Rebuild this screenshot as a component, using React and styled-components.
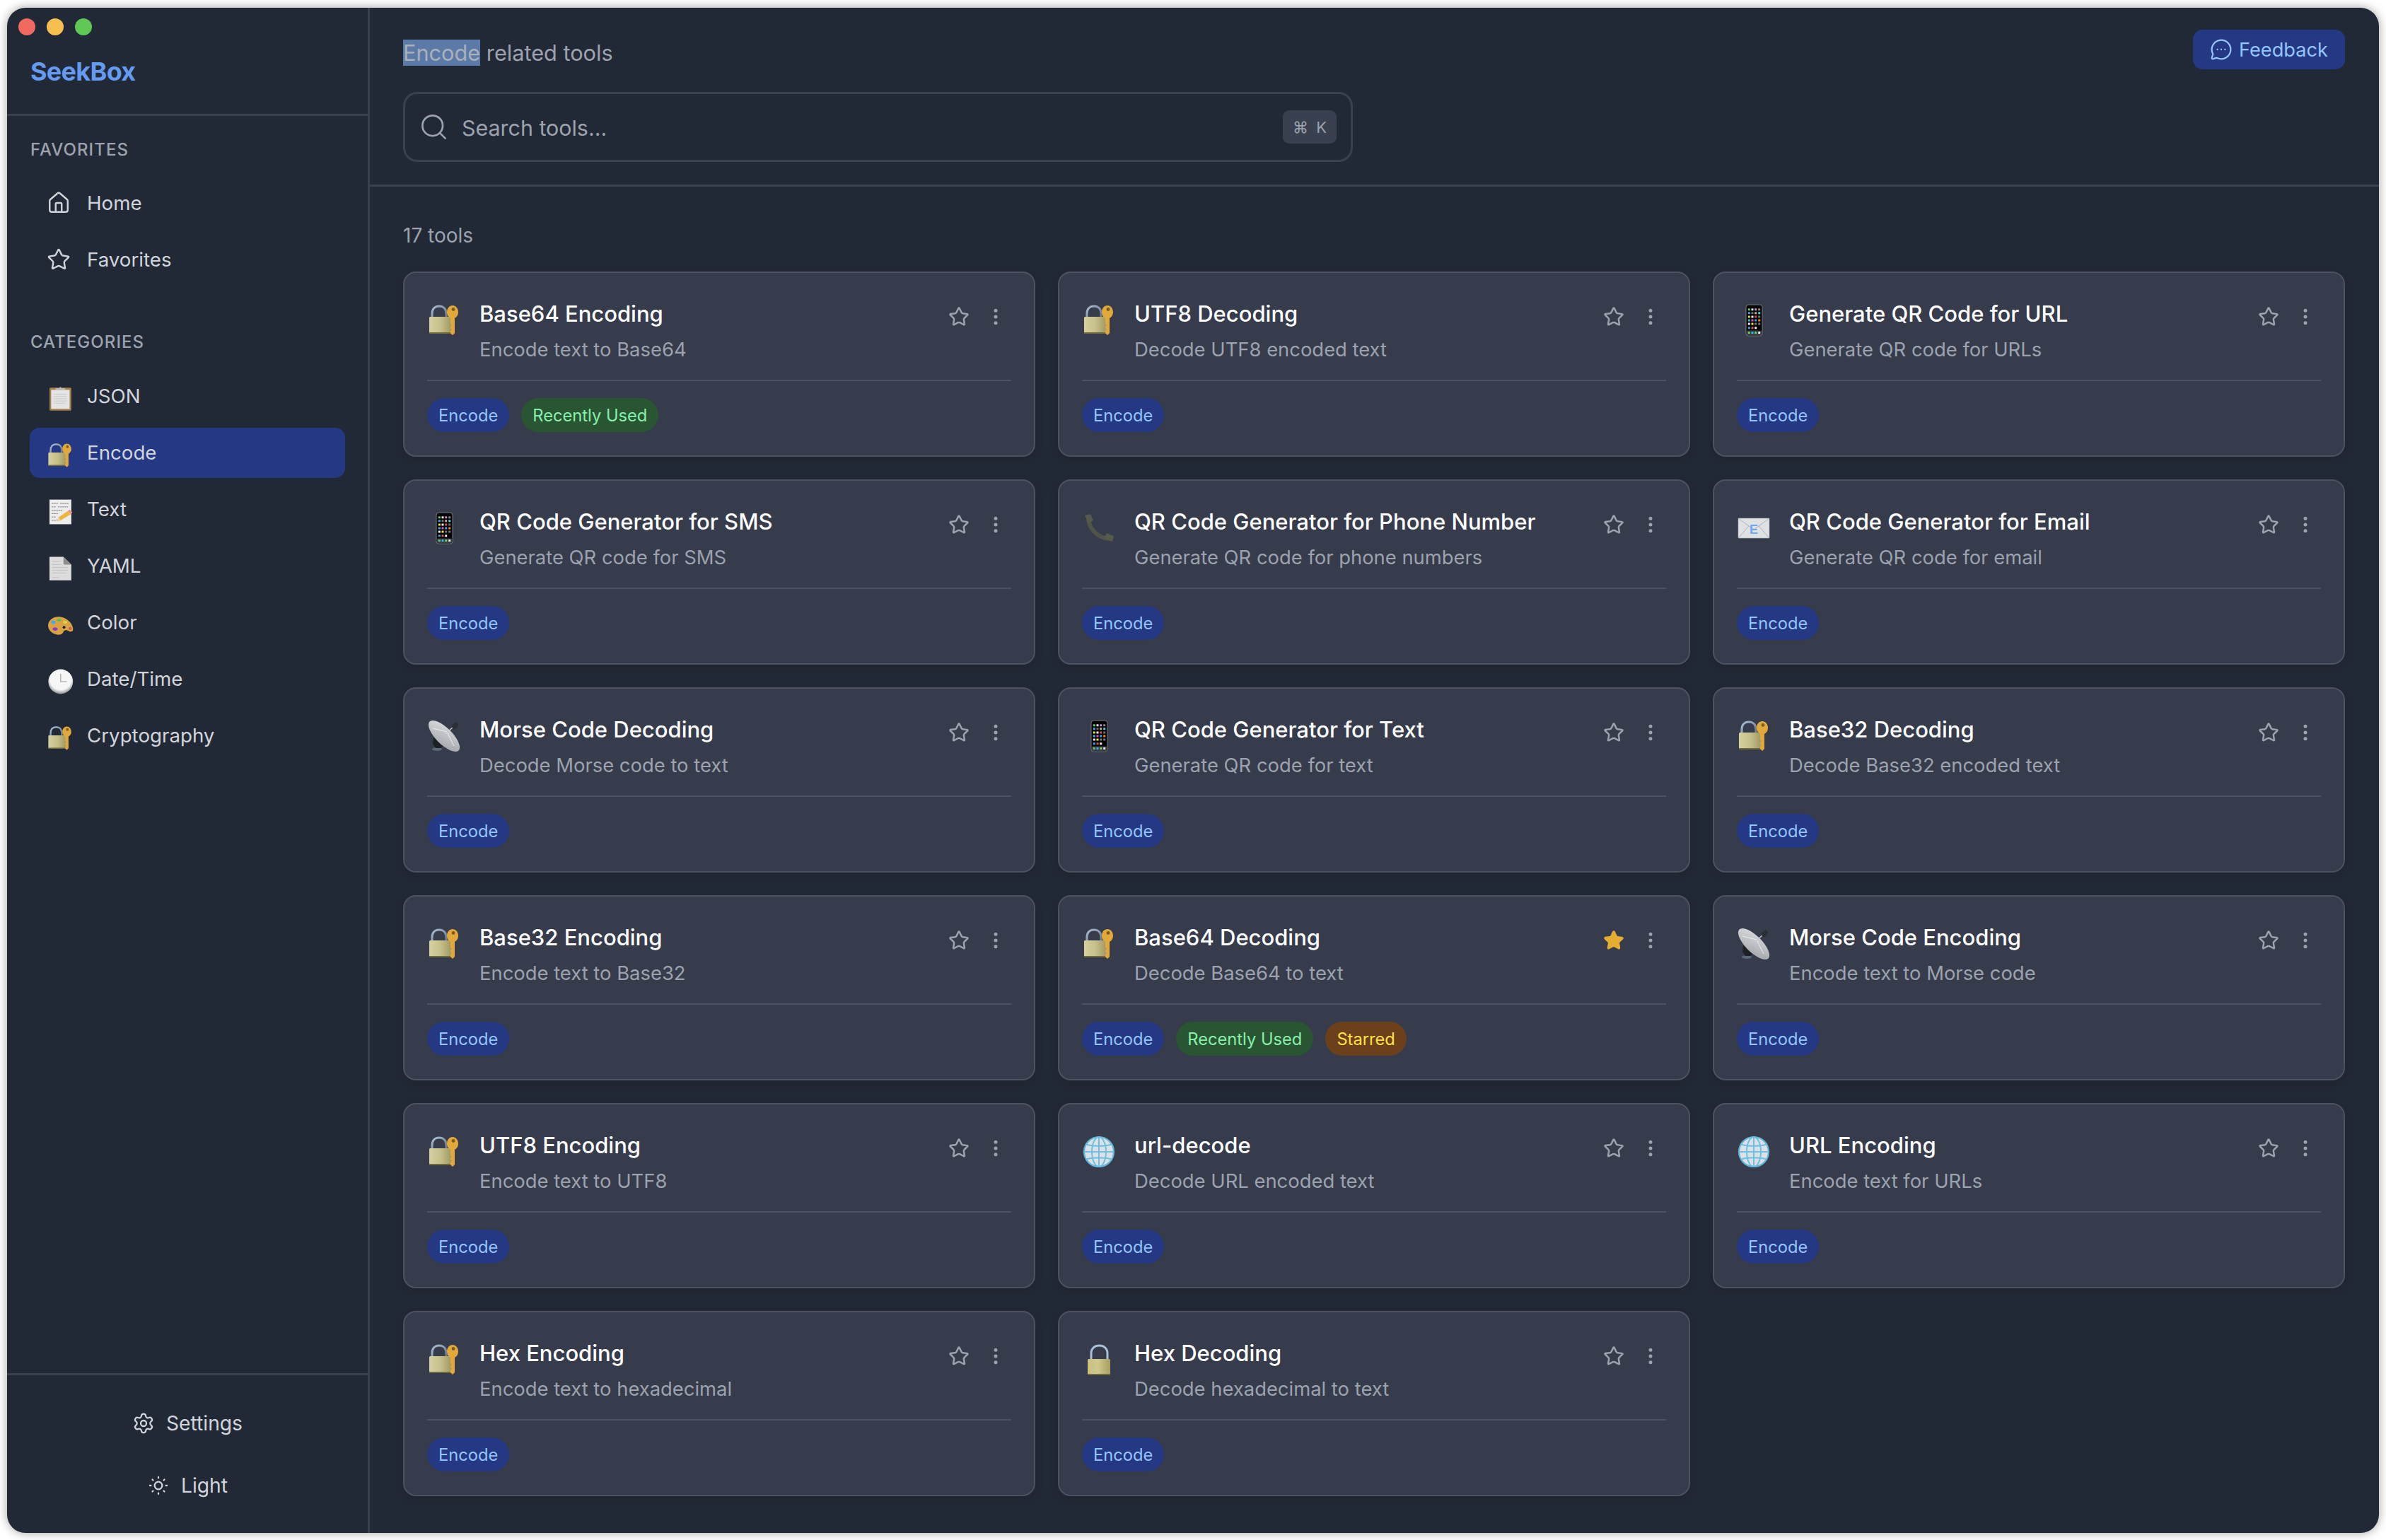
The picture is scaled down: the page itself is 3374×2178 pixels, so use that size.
import React from 'react';
import styled, { createGlobalStyle } from 'styled-components';
import {
    Home, Star, Search, Settings, SunMedium, MessageCircleMore, EllipsisVertical,
} from 'lucide-react';

const NAV_CATEGORIES = [
    { name: 'JSON', icon: 'clipboard' },
    { name: 'Encode', icon: 'lockKey', active: true },
    { name: 'Text', icon: 'memo' },
    { name: 'YAML', icon: 'page' },
    { name: 'Color', icon: 'palette' },
    { name: 'Date/Time', icon: 'clock' },
    { name: 'Cryptography', icon: 'lockKey' },
];

const TOOLS = [
    { title: 'Base64 Encoding', desc: 'Encode text to Base64', icon: 'lockKey', recent: true },
    { title: 'UTF8 Decoding', desc: 'Decode UTF8 encoded text', icon: 'lockKey' },
    { title: 'Generate QR Code for URL', desc: 'Generate QR code for URLs', icon: 'phone' },
    { title: 'QR Code Generator for SMS', desc: 'Generate QR code for SMS', icon: 'phone' },
    { title: 'QR Code Generator for Phone Number', desc: 'Generate QR code for phone numbers', icon: 'receiver' },
    { title: 'QR Code Generator for Email', desc: 'Generate QR code for email', icon: 'envelope' },
    { title: 'Morse Code Decoding', desc: 'Decode Morse code to text', icon: 'dish' },
    { title: 'QR Code Generator for Text', desc: 'Generate QR code for text', icon: 'phone' },
    { title: 'Base32 Decoding', desc: 'Decode Base32 encoded text', icon: 'lockKey' },
    { title: 'Base32 Encoding', desc: 'Encode text to Base32', icon: 'lockKey' },
    { title: 'Base64 Decoding', desc: 'Decode Base64 to text', icon: 'lockKey', recent: true, starred: true },
    { title: 'Morse Code Encoding', desc: 'Encode text to Morse code', icon: 'dish' },
    { title: 'UTF8 Encoding', desc: 'Encode text to UTF8', icon: 'lockKey' },
    { title: 'url-decode', desc: 'Decode URL encoded text', icon: 'globe' },
    { title: 'URL Encoding', desc: 'Encode text for URLs', icon: 'globe' },
    { title: 'Hex Encoding', desc: 'Encode text to hexadecimal', icon: 'lockKey' },
    { title: 'Hex Decoding', desc: 'Decode hexadecimal to text', icon: 'lock' },
];

const PHONE_APPS = [
    ['#5fd068', '#e8e8e8', '#c58ad8', '#8a8a8a'],
    ['#3fa9f0', '#6e6e6e', '#c9b48a', '#4fd0e8'],
    ['#f2d93c', '#efefef', '#e0504a', '#6e6e6e'],
    ['#36c0e0', '#e04fc0', '#3fa0f0', '#f08a20'],
    ['#f2f2f2', '#f2d93c', '#777777', '#777777'],
    ['#3fa9f0', '#e0504a', '#f2f2f2', '#000000'],
];
const PHONE_COLS = [17.3, 22, 26.7, 31.7];
const PHONE_ROWS = [8.7, 13.7, 19, 24, 29, 34.7];
const PHONE_DOCK = ['#5fd068', '#3fa9f0', '#5fd068', '#e8e8e8'];

function LockKeyDrawing() {
    return (
        <>
            <defs>
                <linearGradient id="brass" x1="0" x2="1" y1="0" y2="0">
                    <stop offset="0" stopColor="#d6d1a0" />
                    <stop offset="0.5" stopColor="#c6bf8a" />
                    <stop offset="1" stopColor="#9c9460" />
                </linearGradient>
                <linearGradient id="shackle" x1="0" x2="1" y1="0" y2="1">
                    <stop offset="0" stopColor="#a8bed8" />
                    <stop offset="1" stopColor="#6f7680" />
                </linearGradient>
            </defs>
            <path d="M7 20v-5C7 8 11 4 17 4s10 4 10 11v5" fill="none" stroke="url(#shackle)" strokeWidth="3.2" />
            <rect x="3" y="19" width="33" height="24" rx="1.5" fill="url(#brass)" />
            <rect x="3" y="41" width="33" height="2" fill="#6f6a3c" />
            <path d="M36 3c4.500 0 8 4 8 9.500 0 4-2 7-5 8.500v21l-3 3-3-3v-3l2-2-2-2v-2l2-2-2-2V21c-3-1.500-5-4.500-5-8.500C28 7 31.500 3 36 3z" fill="#e0a93a" />
            <circle cx="37" cy="8.500" r="2.400" fill="#7c5c20" />
        </>
    );
}

function LockDrawing() {
    return (
        <>
            <defs>
                <linearGradient id="brassPlain" x1="0" x2="1" y1="0" y2="0">
                    <stop offset="0" stopColor="#c9c080" />
                    <stop offset="0.45" stopColor="#d0c88c" />
                    <stop offset="1" stopColor="#a79e60" />
                </linearGradient>
            </defs>
            <path d="M13 24V15C13 8 18 4 24.500 4S36 8 36 15v9" fill="none" stroke="#aac0d8" strokeWidth="3" />
            <rect x="8" y="23" width="32" height="23" rx="1.5" fill="url(#brassPlain)" />
            <rect x="8" y="44" width="32" height="2" fill="#6f6a3c" />
        </>
    );
}

function PhoneDrawing() {
    return (
        <>
            <rect x="13" y="2" width="23" height="44" rx="3.500" fill="#050505" stroke="#77797f" strokeWidth="1" />
            {PHONE_ROWS.map((y, r) => PHONE_COLS.map((x, c) => (
                <rect key={`${r}-${c}`} x={x - 1.5} y={y - 1.5} width="3" height="3" rx="0.6" fill={PHONE_APPS[r][c]} />
            )))}
            <rect x="14" y="38.500" width="21" height="6.500" rx="1" fill="#3a3d42" />
            {PHONE_COLS.map((x, c) => (
                <rect key={x} x={x - 1.5} y="40" width="3" height="3" rx="0.6" fill={PHONE_DOCK[c]} />
            ))}
        </>
    );
}

function ReceiverDrawing() {
    return (
        <>
            <path d="M9 9c0 15 13 29 30 30" fill="none" stroke="#4f5348" strokeWidth="6" strokeLinecap="round" />
            <path d="M4 6l8-2 4 9-7 4z" fill="#565a4d" />
            <path d="M31 38l4-7 10 4-2 8z" fill="#565a4d" />
        </>
    );
}

function EnvelopeDrawing() {
    return (
        <>
            <rect x="2" y="10" width="44" height="28" rx="0.8" fill="#dfe2e5" stroke="#a9adb3" strokeWidth="0.6" />
            <path d="M2.500 10.500L24 26l21.500-15.500M2.500 37.500L17 21M45.500 37.500L31 21" fill="none" stroke="#a9adb3" strokeWidth="0.9" />
            <text x="24" y="32" textAnchor="middle" fontFamily="Liberation Sans, sans-serif" fontWeight="700" fontSize="18" fill="#6fa6ec">E</text>
        </>
    );
}

function DishDrawing() {
    return (
        <>
            <defs>
                <linearGradient id="dishFace" x1="0" x2="1" y1="0" y2="1">
                    <stop offset="0" stopColor="#dcdee1" />
                    <stop offset="1" stopColor="#9ea1a6" />
                </linearGradient>
            </defs>
            <ellipse cx="14" cy="42.500" rx="7" ry="2.600" fill="#5b6878" />
            <path d="M9 26l-1 9 4 6h7l8-8z" fill="#1d2025" />
            <ellipse cx="24" cy="24" rx="29" ry="11.500" transform="rotate(45 24 24)" fill="url(#dishFace)" />
            <path d="M8 13L28 18M28 18L38 38" stroke="#f2f3f4" strokeWidth="0.9" fill="none" />
            <path d="M26 21L37 11" stroke="#c9ccd0" strokeWidth="1.4" />
            <path d="M34 9l7-5 3 3-1 5-6 3z" fill="#2c2f34" />
        </>
    );
}

function GlobeDrawing() {
    return (
        <>
            <circle cx="24" cy="24" r="21" fill="#dde1e5" stroke="#62b4d8" strokeWidth="2.200" />
            <g fill="none" stroke="#6cc0e2" strokeWidth="2">
                <ellipse cx="24" cy="24" rx="10" ry="21" />
                <path d="M24 3v42M3 24h42M6 13.500c10 3 26 3 36 0M6 34.500c10-3 26-3 36 0" />
            </g>
        </>
    );
}

function ClipboardDrawing() {
    return (
        <>
            <rect x="5" y="4" width="39" height="41" rx="2" fill="#a37f4b" />
            <rect x="8" y="8" width="33" height="34" fill="#e4e4e4" />
            <path d="M13 16h23M13 20h23M13 24h23M13 28h23M13 32h20" stroke="#c2c2c2" strokeWidth="1" />
            <path d="M16 5h7c0-3 3-3 3 0h7v3H16z" fill="#b8babd" />
        </>
    );
}

function MemoDrawing() {
    return (
        <>
            <rect x="5" y="2" width="39" height="44" fill="#ececec" />
            <path d="M9 9h12M24 9h15M9 15h8M20 15h18M9 21h20M9 27h12M9 33h8M9 39h10" stroke="#55575a" strokeWidth="1" strokeDasharray="3 1" />
            <path d="M18 40l4-7 16-11 5 6-18 11z" fill="#eab63c" />
            <path d="M38 22l3-2 5 5-3 3z" fill="#e98f96" />
            <path d="M18 40l4-7 3 6z" fill="#e8cfa0" />
        </>
    );
}

function PageDrawing() {
    return (
        <>
            <path d="M5 3h25l14 14v28H5z" fill="#dcdcdc" />
            <path d="M30 3l14 14H32a2 2 0 0 1-2-2z" fill="#8e8e8e" />
            <path d="M10 12h14M10 17h16M10 22h28M10 27h28M10 32h26M10 40h12" stroke="#bdbdbd" strokeWidth="1" />
        </>
    );
}

function PaletteDrawing() {
    return (
        <>
            <path d="M3 21C6 11 18 7 28 10c10 3 18 11 19 20 1 5-3 7-7 5-5-3-9-2-10 1-2 5-8 7-15 4C6 37 1 29 3 21z" fill="#d8a245" />
            <ellipse cx="12" cy="19" rx="4" ry="3" fill="#4fa3e8" />
            <ellipse cx="22" cy="15" rx="4" ry="2.500" fill="#58c24c" />
            <ellipse cx="33" cy="19" rx="3.500" ry="2.500" fill="#e6d23c" />
            <ellipse cx="42" cy="30" rx="2.600" ry="3" fill="#e0584a" />
            <ellipse cx="15" cy="31" rx="4.500" ry="3" fill="#8a3fc0" />
            <circle cx="31" cy="28" r="2.400" fill="#1c1c1c" />
        </>
    );
}

function ClockDrawing() {
    return (
        <>
            <defs>
                <radialGradient id="clockFace" cx="0.5" cy="0.4" r="0.6">
                    <stop offset="0.72" stopColor="#f6f6f6" />
                    <stop offset="1" stopColor="#8b8d90" />
                </radialGradient>
            </defs>
            <circle cx="25" cy="24" r="22" fill="url(#clockFace)" />
            <path d="M25 10v14h11" fill="none" stroke="#b5b7ba" strokeWidth="2" />
        </>
    );
}

const DRAWINGS = {
    lockKey: LockKeyDrawing,
    lock: LockDrawing,
    phone: PhoneDrawing,
    receiver: ReceiverDrawing,
    envelope: EnvelopeDrawing,
    dish: DishDrawing,
    globe: GlobeDrawing,
    clipboard: ClipboardDrawing,
    memo: MemoDrawing,
    page: PageDrawing,
    palette: PaletteDrawing,
    clock: ClockDrawing,
};

function Emoji({ name, className }) {
    const Drawing = DRAWINGS[name];
    return (
        <svg className={className} viewBox="0 0 48 48" aria-hidden="true">
            <Drawing />
        </svg>
    );
}

function ToolCard({ tool }) {
    return (
        <Card>
            <CardTop>
                <CardEmoji name={tool.icon} />
                <CardText>
                    <CardTitle>{tool.title}</CardTitle>
                    <CardDesc>{tool.desc}</CardDesc>
                </CardText>
                <CardActions>
                    <ActionButton>
                        {tool.starred
                            ? <Star size={30} color="#e5ae33" fill="#e5ae33" />
                            : <Star size={30} />}
                    </ActionButton>
                    <ActionButton><EllipsisVertical size={30} /></ActionButton>
                </CardActions>
            </CardTop>
            <CardTags>
                <Tag $kind="encode">Encode</Tag>
                {tool.recent && <Tag $kind="recent">Recently Used</Tag>}
                {tool.starred && <Tag $kind="starred">Starred</Tag>}
            </CardTags>
        </Card>
    );
}

export default function App() {
    return (
        <>
            <GlobalStyle />
            <Window>
                <Sidebar>
                    <SidebarHead>
                        <Lights>
                            <Light $color="#f1695f" />
                            <Light $color="#f6bf4f" />
                            <Light $color="#5fc754" />
                        </Lights>
                        <Logo>SeekBox</Logo>
                    </SidebarHead>
                    <SidebarNav>
                        <SectionLabel>FAVORITES</SectionLabel>
                        <NavList>
                            <NavItem><NavSlot><Home size={34} strokeWidth={1.7} /></NavSlot>Home</NavItem>
                            <NavItem><NavSlot><Star size={34} strokeWidth={1.7} /></NavSlot>Favorites</NavItem>
                        </NavList>
                        <SectionLabel $spaced>CATEGORIES</SectionLabel>
                        <NavList>
                            {NAV_CATEGORIES.map((c) => (
                                <NavItem key={c.name} $active={c.active}>
                                    <NavSlot><NavEmoji name={c.icon} /></NavSlot>
                                    {c.name}
                                </NavItem>
                            ))}
                        </NavList>
                    </SidebarNav>
                    <SidebarFoot>
                        <FootButton><Settings size={32} strokeWidth={1.7} />Settings</FootButton>
                        <FootButton><SunMedium size={32} strokeWidth={1.7} />Light</FootButton>
                    </SidebarFoot>
                </Sidebar>
                <Main>
                    <Header>
                        <HeaderRow>
                            <PageTitle><Selected>Encode</Selected> related tools</PageTitle>
                            <FeedbackButton><MessageCircleMore size={32} strokeWidth={1.7} />Feedback</FeedbackButton>
                        </HeaderRow>
                        <SearchBox>
                            <Search size={43} strokeWidth={1.5} />
                            <SearchHint>Search tools...</SearchHint>
                            <Shortcut>⌘ K</Shortcut>
                        </SearchBox>
                    </Header>
                    <Content>
                        <ToolCount>17 tools</ToolCount>
                        <CardGrid>
                            {TOOLS.map((t) => <ToolCard key={t.title} tool={t} />)}
                        </CardGrid>
                    </Content>
                </Main>
            </Window>
        </>
    );
}

const GlobalStyle = createGlobalStyle`
    * { box-sizing: border-box; }
    html, body {
        margin: 0;
        height: 2178px;
        overflow: hidden;
        background: #ffffff;
        font-family: Inter, "Noto Sans", "DejaVu Sans", sans-serif;
    }
    body { padding: 11px 10px 10px; }
`;

const Window = styled.div`
    display: flex;
    height: 2157px;
    border-radius: 26px;
    overflow: hidden;
    background: #222936;
    box-shadow: 0 0 14px rgba(0, 0, 0, 0.38);
`;

const Sidebar = styled.aside`
    display: flex;
    flex-direction: column;
    width: 513px;
    flex: none;
    border-right: 3px solid #394150;
`;

const SidebarHead = styled.div`
    height: 153px;
    padding: 15px 0 0 33px;
    border-bottom: 3px solid #394150;
`;

const Lights = styled.div`
    display: flex;
    gap: 16px;
    margin-left: -17px;
`;

const Light = styled.span`
    width: 24px;
    height: 24px;
    border-radius: 50%;
    background: ${(p) => p.$color};
`;

const Logo = styled.div`
    margin-top: 26px;
    font-size: 36px;
    line-height: 50px;
    font-weight: 700;
    letter-spacing: -0.7px;
    color: #649bf0;
`;

const SidebarNav = styled.nav`
    flex: 1;
    padding: 33px 32px 0 32px;
`;

const SectionLabel = styled.div`
    padding-left: 1px;
    margin-top: ${(p) => (p.$spaced ? '66px' : '0')};
    margin-bottom: ${(p) => (p.$spaced ? '26px' : '25px')};
    font-size: 24px;
    line-height: 30px;
    font-weight: 500;
    letter-spacing: 1.05px;
    color: #9ca3af;
`;

const NavList = styled.div`
    display: flex;
    flex-direction: column;
    gap: 9px;
`;

const NavItem = styled.div`
    display: flex;
    align-items: center;
    height: 71px;
    padding-left: 24px;
    padding-bottom: 1px;
    border-radius: 14px;
    font-size: 27.7px;
    color: #d1d5db;
    background: ${(p) => (p.$active ? '#253883' : 'transparent')};
`;

const NavSlot = styled.span`
    display: flex;
    align-items: center;
    width: 38px;
    height: 38px;
    margin-right: 19px;
    flex: none;
`;

const NavEmoji = styled(Emoji)`
    width: 38px;
    height: 38px;
    margin-top: 8px;
`;

const SidebarFoot = styled.div`
    display: flex;
    flex-direction: column;
    gap: 17px;
    padding: 32px 0;
    border-top: 3px solid #394150;
`;

const FootButton = styled.div`
    display: flex;
    align-items: center;
    justify-content: center;
    gap: 16px;
    height: 71px;
    font-size: 28.2px;
    color: #d1d5db;
`;

const Main = styled.main`
    flex: 1;
    min-width: 0;
`;

const Header = styled.header`
    height: 253px;
    padding: 31px 48px 0 47px;
    border-bottom: 3px solid #394150;
`;

const HeaderRow = styled.div`
    display: flex;
    justify-content: space-between;
    align-items: flex-start;
`;

const PageTitle = styled.div`
    margin-top: 15px;
    font-size: 30.7px;
    line-height: 36px;
    color: #9ca3af;
`;

const Selected = styled.span`
    background: #5b7aa8;
    color: #a9b0ba;
`;

const FeedbackButton = styled.div`
    display: flex;
    align-items: center;
    gap: 9px;
    height: 56px;
    padding: 0 24px 0 24px;
    border-radius: 14px;
    font-size: 27.2px;
    color: #93c5fd;
    background: #253883;
`;

const SearchBox = styled.div`
    display: flex;
    align-items: center;
    gap: 18px;
    width: 1343px;
    height: 99px;
    margin-top: 32px;
    padding: 0 20px 0 19px;
    border: 3px solid #394150;
    border-radius: 20px;
    color: #9ca3af;
`;

const SearchHint = styled.span`
    flex: 1;
    padding-top: 2px;
    font-size: 30.4px;
`;

const Shortcut = styled.span`
    display: flex;
    align-items: center;
    justify-content: center;
    width: 76px;
    height: 47px;
    border-radius: 9px;
    font-size: 22px;
    word-spacing: 5px;
    background: #394150;
`;

const Content = styled.section`
    padding: 51px 48px 0 47px;
`;

const ToolCount = styled.div`
    margin-bottom: 33px;
    font-size: 28px;
    line-height: 36px;
    color: #9ca3af;
`;

const CardGrid = styled.div`
    display: grid;
    grid-template-columns: repeat(3, 894px);
    grid-auto-rows: 262px;
    gap: 32px;
`;

const Card = styled.article`
    display: flex;
    flex-direction: column;
    padding: 32px;
    border: 2px solid #4b5262;
    border-radius: 18px;
    background: #363c4c;
    box-shadow: 0 4px 14px rgba(0, 0, 0, 0.12);
`;

const CardTop = styled.div`
    display: flex;
    align-items: flex-start;
    height: 121px;
    padding-bottom: 25px;
    border-bottom: 2px solid #4b5262;
`;

const CardEmoji = styled(Emoji)`
    width: 48px;
    height: 48px;
    margin: 11px 26px 0 0;
    flex: none;
`;

const CardText = styled.div`
    flex: 1;
    min-width: 0;
`;

const CardTitle = styled.div`
    font-size: 31px;
    line-height: 51px;
    font-weight: 500;
    color: #ffffff;
`;

const CardDesc = styled.div`
    margin-top: 5px;
    font-size: 27.4px;
    line-height: 40px;
    color: #9ca3af;
`;

const CardActions = styled.div`
    display: flex;
    gap: 8px;
    margin-top: 8px;
`;

const ActionButton = styled.span`
    display: flex;
    align-items: center;
    justify-content: center;
    width: 44px;
    height: 44px;
    color: #9ca3af;
`;

const TAG_COLORS = {
    encode: ['#253883', '#93c5fd'],
    recent: ['#2a5532', '#86efac'],
    starred: ['#6d401c', '#fde047'],
};

const CardTags = styled.div`
    display: flex;
    gap: 17px;
    margin-top: 24px;
`;

const Tag = styled.span`
    display: flex;
    align-items: center;
    height: 48px;
    padding: 0 16px;
    border-radius: 24px;
    font-size: 23.7px;
    color: ${(p) => TAG_COLORS[p.$kind][1]};
    background: ${(p) => TAG_COLORS[p.$kind][0]};
`;
